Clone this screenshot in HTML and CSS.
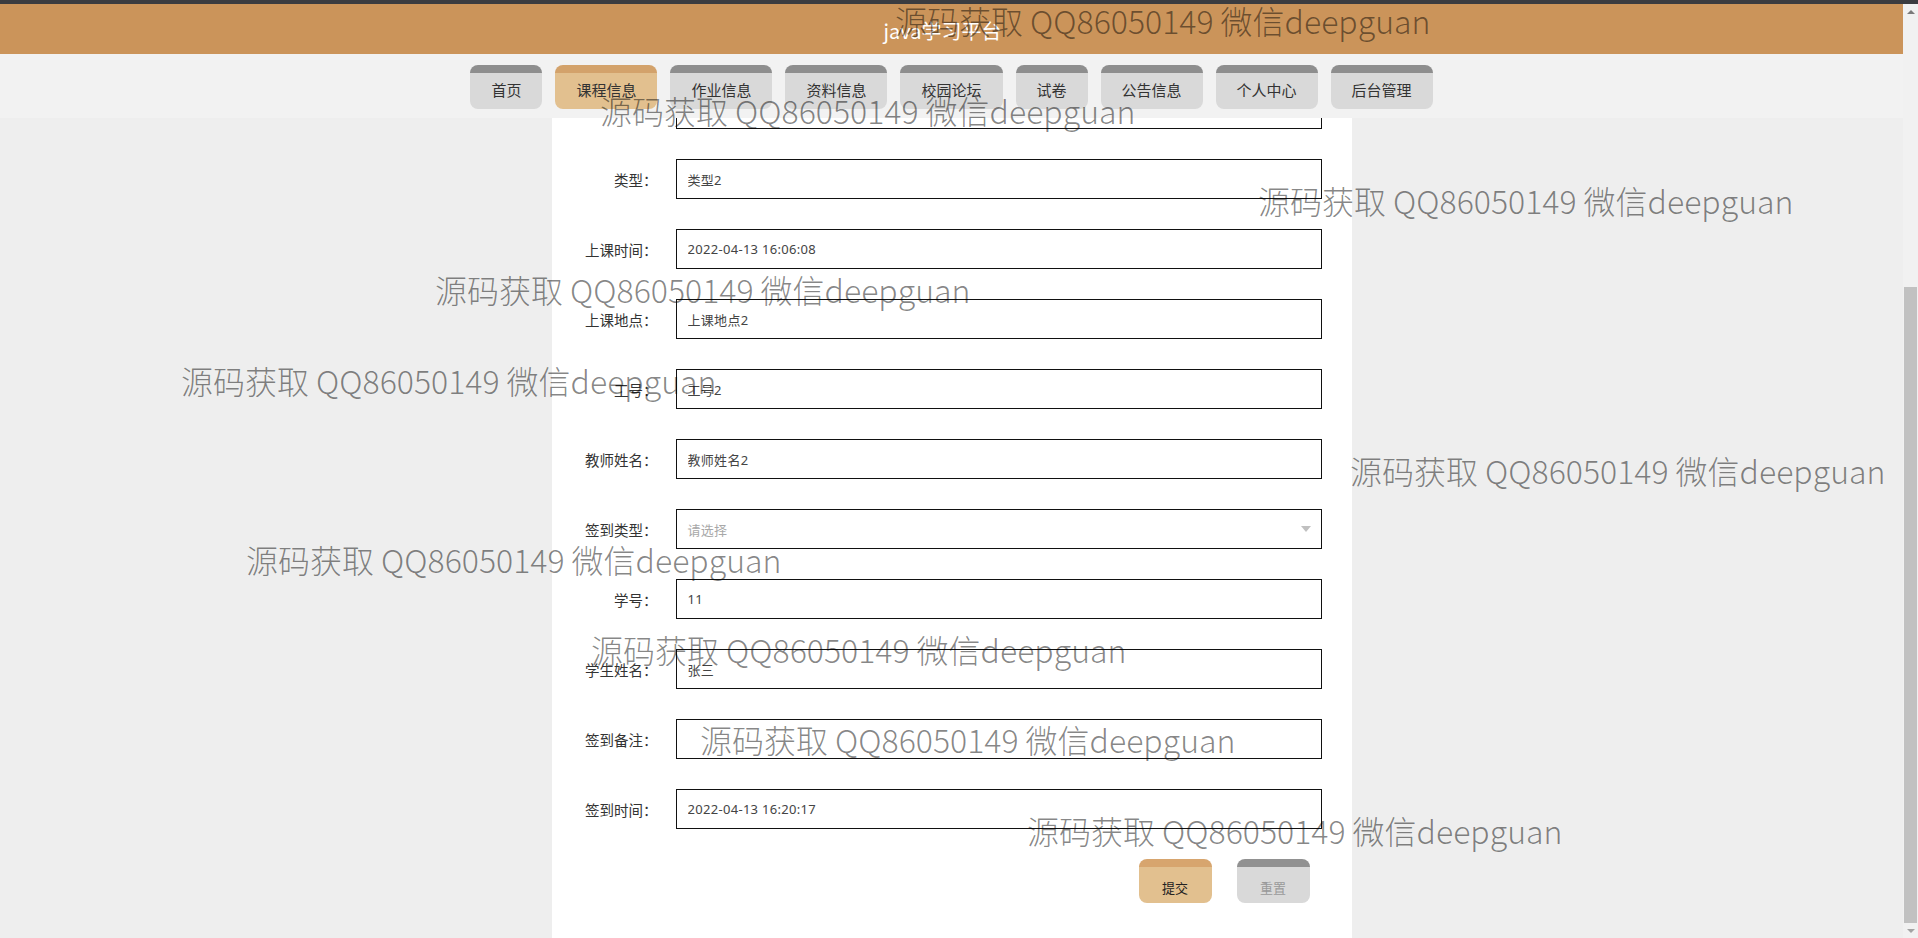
FILE: index.html
```html
<!DOCTYPE html>
<html lang="zh-CN">
<head>
<meta charset="utf-8">
<title>java学习平台</title>
<link rel="stylesheet" href="styles.css">
</head>
<body>
<div class="topbar"></div>
<div class="window">
  <div class="page">
    <header class="header"><h1 class="title">java学习平台</h1></header>
    <nav class="nav">
      <a class="nav-btn">首页</a>
      <a class="nav-btn active">课程信息</a>
      <a class="nav-btn">作业信息</a>
      <a class="nav-btn">资料信息</a>
      <a class="nav-btn">校园论坛</a>
      <a class="nav-btn">试卷</a>
      <a class="nav-btn">公告信息</a>
      <a class="nav-btn">个人中心</a>
      <a class="nav-btn">后台管理</a>
    </nav>
    <main class="content">
      <div class="panel">
        <form class="form">
          <div class="row"><label class="label">课程名称<span class="colon">：</span></label><input class="field" value="课程名称2"></div>
          <div class="row"><label class="label">类型<span class="colon">：</span></label><input class="field" value="类型2"></div>
          <div class="row"><label class="label">上课时间<span class="colon">：</span></label><input class="field" value="2022-04-13 16:06:08"></div>
          <div class="row"><label class="label">上课地点<span class="colon">：</span></label><input class="field" value="上课地点2"></div>
          <div class="row"><label class="label">工号<span class="colon">：</span></label><input class="field" value="工号2"></div>
          <div class="row"><label class="label">教师姓名<span class="colon">：</span></label><input class="field" value="教师姓名2"></div>
          <div class="row"><label class="label">签到类型<span class="colon">：</span></label><div class="field select"><span class="placeholder">请选择</span><span class="arrow"></span></div></div>
          <div class="row"><label class="label">学号<span class="colon">：</span></label><input class="field" value="11"></div>
          <div class="row"><label class="label">学生姓名<span class="colon">：</span></label><input class="field" value="张三"></div>
          <div class="row"><label class="label">签到备注<span class="colon">：</span></label><input class="field" value=""></div>
          <div class="row"><label class="label">签到时间<span class="colon">：</span></label><input class="field" value="2022-04-13 16:20:17"></div>
          <div class="actions">
            <button type="button" class="btn btn-submit">提交</button>
            <button type="button" class="btn btn-reset">重置</button>
          </div>
        </form>
      </div>
    </main>
  </div>
  <div class="scrollbar">
    <div class="sb-arrow sb-up"></div>
    <div class="sb-track"><div class="sb-thumb"></div></div>
    <div class="sb-arrow sb-down"></div>
  </div>
</div>
<div class="wm wm1">源码获取 QQ86050149 微信deepguan</div>
<div class="wm wm2">源码获取 QQ86050149 微信deepguan</div>
<div class="wm wm3">源码获取 QQ86050149 微信deepguan</div>
<div class="wm wm4">源码获取 QQ86050149 微信deepguan</div>
<div class="wm wm5">源码获取 QQ86050149 微信deepguan</div>
<div class="wm wm6">源码获取 QQ86050149 微信deepguan</div>
<div class="wm wm7">源码获取 QQ86050149 微信deepguan</div>
<div class="wm wm8">源码获取 QQ86050149 微信deepguan</div>
<div class="wm wm9">源码获取 QQ86050149 微信deepguan</div>
<div class="wm wm10">源码获取 QQ86050149 微信deepguan</div>
</body>
</html>
```

FILE: styles.css
```css
* { box-sizing: border-box; }
html, body { margin: 0; padding: 0; }
body {
  width: 1918px;
  height: 938px;
  overflow: hidden;
  position: relative;
  font-family: "Noto Sans CJK SC", "Noto Sans", "Liberation Sans", sans-serif;
  color: #333;
  display: flex;
  flex-direction: column;
  background: #eeeeee;
}
.topbar { height: 4px; background: #3b3c40; flex: none; }
.window { flex: 1; display: flex; min-height: 0; }
.page { flex: 1; display: flex; flex-direction: column; min-width: 0; }

.header {
  height: 50px;
  background: #cb945a;
  display: flex;
  align-items: center;
  justify-content: center;
  padding-right: 18px;
  flex: none;
}
.title {
  margin: 0;
  font-size: 20px;
  font-weight: normal;
  color: #fff;
  line-height: 1;
  transform: translateY(2px);
}

.nav {
  height: 64px;
  background: #f2f2f2;
  display: flex;
  justify-content: center;
  align-items: flex-start;
  gap: 13px;
  padding-top: 11px;
  flex: none;
}
.nav-btn {
  height: 44px;
  padding: 0 21px;
  font-size: 15px;
  line-height: 34px;
  color: #333;
  background: #d9d9d9;
  border-top: 8px solid #8e8e8e;
  border-radius: 8px;
  text-align: center;
  cursor: pointer;
}
.nav-btn.active { background: #e2c08f; border-top-color: #d3a26b; }

.content {
  flex: 1;
  min-height: 0;
  overflow: hidden;
  display: flex;
  justify-content: center;
  background: #eeeeee;
}
.panel { width: 800px; background: #fff; }
.form { margin-top: -29px; }

.row {
  display: flex;
  align-items: center;
  height: 40px;
  margin-bottom: 30px;
}
.label {
  width: 106px;
  text-align: right;
  font-size: 14.5px;
  color: #333;
  flex: none;
}
.colon { font-family: "Noto Sans CJK JP", "Noto Sans CJK SC", sans-serif; }
.field {
  margin-left: 18px;
  width: 646px;
  height: 40px;
  border: 1px solid #111;
  border-radius: 0;
  padding: 0 11px;
  font-family: "Noto Sans", "Noto Sans CJK SC", sans-serif;
  font-size: 13px;
  letter-spacing: 0.3px;
  color: #444;
  background: #fff;
  outline: none;
  flex: none;
}
.select {
  display: flex;
  align-items: center;
  justify-content: space-between;
  padding-right: 10px;
}
.placeholder { color: #a8a8a8; }
.arrow {
  width: 0; height: 0;
  border-left: 5px solid transparent;
  border-right: 5px solid transparent;
  border-top: 6px solid #c0c0c0;
}

.actions {
  display: flex;
  justify-content: flex-end;
  gap: 25px;
  padding-right: 42px;
}
.btn {
  width: 73px;
  height: 44px;
  border: none;
  border-top: 8px solid #919191;
  border-radius: 8px;
  background: #d9d9d9;
  font-family: inherit;
  font-size: 13px;
  padding: 4px 0 0 0;
  color: #999;
  cursor: pointer;
}
.btn-submit { background: #e2c08f; border-top-color: #d7a56e; color: #222; }

.scrollbar {
  width: 15px;
  flex: none;
  background: #f1f1f1;
  display: flex;
  flex-direction: column;
  align-items: center;
}
.sb-arrow { width: 15px; height: 15px; flex: none; display: flex; justify-content: center; align-items: center; }
.sb-up::before {
  content: "";
  border-left: 4px solid transparent;
  border-right: 4px solid transparent;
  border-bottom: 4px solid #7a7a7a;
}
.sb-down::before {
  content: "";
  border-left: 4px solid transparent;
  border-right: 4px solid transparent;
  border-top: 4px solid #a3a3a3;
}
.sb-track { flex: 1; width: 100%; display: flex; justify-content: center; padding-top: 268px; }
.sb-thumb { width: 13px; height: 636px; background: #c1c1c1; }

.wm {
  position: absolute;
  font-size: 32px;
  line-height: 1;
  font-weight: 300;
  color: rgba(0, 0, 0, 0.48);
  white-space: nowrap;
  pointer-events: none;
}
.wm1 { left: 895px; top: 4px; }
.wm2 { left: 600px; top: 94px; }
.wm3 { left: 1258px; top: 184px; }
.wm4 { left: 435px; top: 273px; }
.wm5 { left: 181px; top: 364px; }
.wm6 { left: 1350px; top: 454px; }
.wm7 { left: 246px; top: 543px; }
.wm8 { left: 591px; top: 633px; }
.wm9 { left: 700px; top: 723px; }
.wm10 { left: 1027px; top: 814px; }
```
